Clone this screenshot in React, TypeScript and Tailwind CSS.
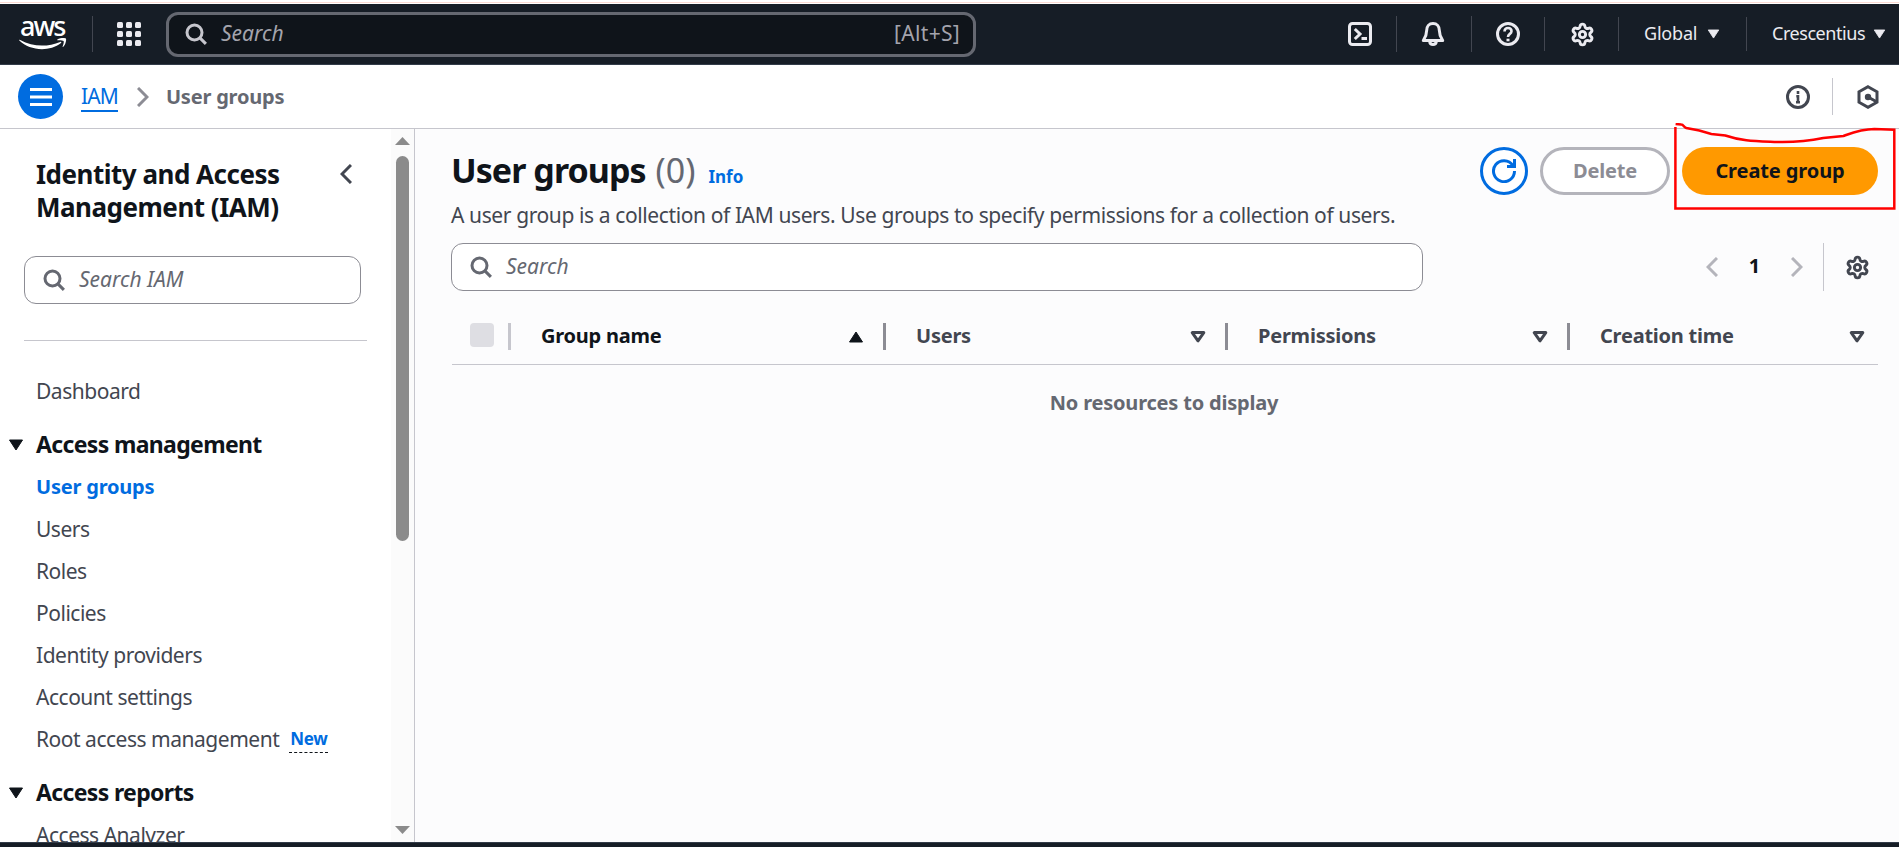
import React from "react";
import { Settings } from "lucide-react";

function SearchIcon({ className = "" }: { className?: string }) {
  return (
    <svg width="24" height="24" viewBox="0 0 16 16" fill="none" stroke="currentColor" strokeWidth="2" className={"shrink-0 " + className}>
      <circle cx="7" cy="7" r="5" />
      <path d="m10.6 10.6 4 4" />
    </svg>
  );
}

function Chevron({ left = false, className = "" }: { left?: boolean; className?: string }) {
  return (
    <svg width="12" height="20" viewBox="0 0 12 20" fill="none" stroke="currentColor" strokeWidth="3" className={"shrink-0 " + className}>
      <path d={left ? "M11 1 2 10l9 9" : "m1 1 9 9-9 9"} />
    </svg>
  );
}

function Caret({ className = "" }: { className?: string }) {
  return (
    <svg width="16" height="12" viewBox="0 0 16 12" fill="currentColor" stroke="currentColor" strokeLinejoin="round" className={"shrink-0 " + className}>
      <path d="M1.5 1h13L8 11z" />
    </svg>
  );
}

function SortIcon() {
  return (
    <svg width="16" height="12" viewBox="0 0 16 12" fill="none" stroke="currentColor" strokeWidth="3" strokeLinejoin="round" className="shrink-0">
      <path d="M2.2 1.6h11.6L8 9.8z" />
    </svg>
  );
}

function AwsLogo() {
  return (
    <div className="relative h-[60px] w-[48px] shrink-0 text-white">
      <span className="absolute left-[1px] top-[8px] text-[27px] font-medium leading-[27px] tracking-[-2px]">aws</span>
      <svg className="absolute left-0 top-[33px]" width="48" height="14" viewBox="0 0 48 14" fill="currentColor">
        <path d="M.3 3.6C0 3.1.5 2.6 1.2 3 8 6.700 15.500 8.600 23 8.600c6 0 12.500-1.300 18.200-3.700.9-.4 1.600.6.800 1.200C36.800 10.200 29.500 12.300 23 12.300 14.200 12.300 6.200 9 .3 3.600z" />
        <path d="M38.600 3.200c-.5 0-.7-.5-.2-.8 2.600-1.700 7.800-1.800 8.500-1 .7.900-.2 6-2.600 8.300-.4.400-.9.200-.7-.3.700-1.600 1.600-4.700 1-5.500-.6-.8-4.200-.8-6-.7z" />
      </svg>
    </div>
  );
}

function AppGrid() {
  return (
    <div className="grid w-[24px] shrink-0 grid-cols-3 gap-[3px]">
      {Array.from({ length: 9 }, (_, i) => (
        <span key={i} className="size-[6px] rounded-[1.5px] bg-[#ebebf0]" />
      ))}
    </div>
  );
}

function HeaderBar() {
  return (
    <header className="flex h-[61px] items-center border-b border-[#333c49] bg-[#161d26] text-[#ebebf0]">
      <div className="flex w-[166px] shrink-0 items-center pl-[19px]">
        <AwsLogo />
        <span className="ml-[25px] h-[36px] w-px bg-[#424650]" />
        <span className="ml-[24px]"><AppGrid /></span>
      </div>
      <div className="flex h-[45px] w-[810px] shrink-0 items-center rounded-[12px] border-[3px] border-[#656871] bg-[#0f141a] pl-[15px] pr-[13px] text-[21px] text-[#a4a4ad]">
        <SearchIcon className="text-[#c6c6cd]" />
        <span className="ml-[13px] pb-[1px] leading-none italic">Search</span>
        <span className="ml-auto pb-[1px] leading-none tracking-[0.300px]">[Alt+S]</span>
      </div>
      <div className="ml-[372px] flex items-center">
        <svg width="24" height="24" viewBox="0 0 24 24" fill="none" stroke="currentColor" strokeWidth="3">
          <rect x="1.500" y="1.500" width="21" height="21" rx="3" />
          <path d="m6.800 7 5.200 5-5.200 5M13.500 16.500H19" />
        </svg>
        <span className="ml-[24px] h-[36px] w-px bg-[#424650]" />
        <svg className="ml-[24px]" width="24" height="24" viewBox="0 0 24 24" fill="none" stroke="currentColor" strokeWidth="3" strokeLinejoin="round">
          <path d="M12 1.500c-4 0-6.300 3-6.300 6.700 0 4.400-1.200 7-3.400 10.300h19.400c-2.200-3.300-3.400-5.900-3.400-10.300 0-3.700-2.300-6.700-6.300-6.700zM8.700 19.500c.2 1.900 1.500 3 3.300 3s3.100-1.100 3.300-3" />
        </svg>
        <span className="ml-[26px] h-[36px] w-px bg-[#424650]" />
        <svg className="ml-[24px]" width="24" height="24" viewBox="0 0 24 24" fill="none" stroke="currentColor">
          <circle cx="12" cy="12" r="10.500" strokeWidth="3" />
          <path d="M8.500 9.500c0-2.200 1.400-3.500 3.500-3.500s3.500 1.300 3.500 3.200c0 2.700-3.500 2.700-3.500 5.800" strokeWidth="2.600" />
          <path d="M12 16.700v2.600" strokeWidth="3" />
        </svg>
        <span className="ml-[24px] h-[34px] w-px bg-[#424650]" />
        <Settings size={25} strokeWidth={2.8} className="ml-[25px]" />
        <span className="ml-[23px] h-[34px] w-px bg-[#424650]" />
        <span className="ml-[25px] w-[54px] whitespace-nowrap pb-[2px] text-[18px] leading-none tracking-[-0.200px]">Global</span>
        <Caret className="ml-[9px] h-[10px] w-[13px]" />
        <span className="ml-[26px] h-[34px] w-px bg-[#424650]" />
        <span className="ml-[25px] w-[95px] whitespace-nowrap pb-[2px] text-[18px] leading-none tracking-[-0.450px]">Crescentius</span>
        <Caret className="ml-[6px] h-[10px] w-[13px]" />
      </div>
    </header>
  );
}

function Toolbar() {
  return (
    <div className="flex h-[64px] shrink-0 items-center border-b border-[#c6c6cd] bg-white pl-[18px]">
      <span className="flex size-[45px] items-center justify-center rounded-full bg-[#006ce0]">
        <svg width="22" height="18" viewBox="0 0 22 18" fill="none" stroke="white" strokeWidth="3">
          <path d="M0 1.500h22M0 9h22M0 16.500h22" />
        </svg>
      </span>
      <span className="ml-[18px] mt-px h-[29px] border-b-2 border-[#006ce0] text-[21px] leading-[27px] tracking-[-0.900px] text-[#006ce0]">IAM</span>
      <Chevron className="ml-[19px] text-[#8c8c94]" />
      <span className="ml-[17px] text-[20px] font-bold leading-none tracking-[-0.200px] text-[#656871]">User groups</span>
      <div className="ml-auto flex items-center pr-[19px] text-[#424650]">
        <svg width="24" height="24" viewBox="0 0 24 24" fill="none" stroke="currentColor" strokeWidth="3">
          <circle cx="12" cy="12" r="10.500" />
          <path d="M12 6v3M10.300 11.300H12V18M10 17.300h4" strokeWidth="2.600" />
        </svg>
        <span className="ml-[22px] h-[37px] w-px bg-[#c6c6cd]" />
        <svg className="ml-[23px]" width="24" height="24" viewBox="0 0 24 24" fill="none" stroke="currentColor" strokeWidth="3">
          <path d="m12 1.700 9 5.100v10.400l-9 5.100-9-5.100V6.800z" />
          <circle cx="12" cy="12" r="3.200" fill="currentColor" stroke="none" />
          <path d="m12 12 9 5" />
        </svg>
      </div>
    </div>
  );
}

function NavItem({ label, active = false, badge }: { label: string; active?: boolean; badge?: string }) {
  return (
    <div className="flex h-[42px] shrink-0 items-center pl-[36px]">
      <span className={active ? "whitespace-nowrap text-[20px] font-bold leading-none tracking-[-0.200px] text-[#006ce0]" : "whitespace-nowrap text-[21px] leading-none tracking-[-0.480px] text-[#424650]"}>{label}</span>
      {badge && (
        <span className="ml-[10px] mt-[4px] h-[24px] border-b border-dashed border-[#0f141a] pl-px text-[17px] font-bold leading-[20px] tracking-[-0.300px] text-[#006ce0]">{badge}</span>
      )}
    </div>
  );
}

function NavHeading({ label }: { label: string }) {
  return (
    <div className="flex h-[44px] shrink-0 items-center pl-[8px] text-[#0f141a]">
      <Caret className="mt-[2px]" />
      <span className="ml-[12px] whitespace-nowrap text-[23px] font-bold leading-none tracking-[-0.650px]">{label}</span>
    </div>
  );
}

function Sidebar() {
  return (
    <aside className="flex w-[415px] shrink-0 border-r border-[#c6c6cd] bg-white">
      <nav className="flex min-w-0 flex-1 flex-col overflow-hidden">
        <div className="flex shrink-0 items-start pl-[36px] pr-[39px] pt-[29px]">
          <h2 className="w-[260px] text-[26px] font-bold leading-[33px] tracking-[-0.500px] text-[#0f141a]">Identity and Access Management (IAM)</h2>
          <Chevron left className="ml-auto mt-[6px] text-[#424650]" />
        </div>
        <div className="ml-[24px] mt-[32px] flex h-[48px] w-[337px] shrink-0 items-center rounded-[12px] border border-[#8c8c94] pl-[17px] text-[#656871]">
          <SearchIcon />
          <span className="ml-[13px] pb-[2px] text-[21px] leading-none italic">Search IAM</span>
        </div>
        <div className="ml-[24px] mt-[36px] h-px w-[343px] shrink-0 bg-[#c6c6cd]" />
        <div className="mt-[29px] flex flex-col">
          <NavItem label="Dashboard" />
          <div className="h-[10px] shrink-0" />
          <NavHeading label="Access management" />
          <NavItem label="User groups" active />
          <NavItem label="Users" />
          <NavItem label="Roles" />
          <NavItem label="Policies" />
          <NavItem label="Identity providers" />
          <NavItem label="Account settings" />
          <NavItem label="Root access management" badge="New" />
          <div className="h-[10px] shrink-0" />
          <NavHeading label="Access reports" />
          <NavItem label="Access Analyzer" />
        </div>
      </nav>
      <div className="flex w-[23px] shrink-0 flex-col items-center bg-[#fbfbfb] pt-[8px] text-[#8b8b8b]">
        <svg width="15" height="8" viewBox="0 0 15 8" fill="currentColor"><path d="M0 8 7.500 0 15 8z" /></svg>
        <div className="mt-[11px] h-[385px] w-[13px] rounded-full bg-[#8b8b8b]" />
        <svg className="mb-[8px] mt-auto" width="15" height="8" viewBox="0 0 15 8" fill="currentColor"><path d="M0 0 7.500 8 15 0z" /></svg>
      </div>
    </aside>
  );
}

function Column({ label, className, sorted = false, last = false }: { label: string; className: string; sorted?: boolean; last?: boolean }) {
  return (
    <div className={"flex h-full shrink-0 items-center text-[#424650] " + className}>
      <span className={"whitespace-nowrap pb-px text-[20px] font-bold leading-none tracking-[-0.230px] " + (sorted ? "text-[#0f141a]" : "")}>{label}</span>
      <span className={"ml-auto mt-px " + (last ? "mr-[13px]" : "mr-[19px]")}>
        {sorted ? <Caret className="rotate-180 text-[#0f141a]" /> : <SortIcon />}
      </span>
      {!last && <span className="h-[27px] w-[3px] bg-[#8c8c94]" />}
    </div>
  );
}

function Main() {
  return (
    <main className="flex min-w-0 flex-1 flex-col bg-[#fcfcfd] pl-[37px] pr-[21px] pt-[18px]">
      <div className="flex h-[48px] shrink-0">
        <h1 className="-ml-px flex items-baseline leading-[46px]">
          <span className="text-[34px] font-bold tracking-[-0.950px] text-[#0f141a]">User groups</span>
          <span className="ml-[10px] text-[34px] text-[#656871]">(0)</span>
          <span className="ml-[13px] text-[17px] font-bold text-[#006ce0]">Info</span>
        </h1>
        <div className="ml-auto flex text-[20px] font-bold leading-none">
          <span className="flex size-[48px] items-center justify-center rounded-full border-[3px] border-[#006ce0] bg-white text-[#006ce0]">
            <svg width="24" height="24" viewBox="0 0 24 24" fill="none" stroke="currentColor" strokeWidth="3">
              <path d="M22.500 12A10.500 10.500 0 1 1 20.800 6.400M22.500 0v7.500H15" />
            </svg>
          </span>
          <span className="ml-[12px] flex w-[130px] items-center justify-center rounded-full border-[3px] border-[#b4b4bb] bg-white pb-px tracking-[-0.150px] text-[#8c8c94]">Delete</span>
          <span className="relative ml-[12px] flex w-[196px] items-center justify-center rounded-full bg-[#ff9900] pb-px tracking-[-0.100px] text-[#0f141a]">
            Create group
            <svg className="absolute left-[-10px] top-[-24px]" width="226" height="90" viewBox="1672 123 226 90" fill="none" stroke="#ff0000" strokeWidth="2.500">
              <path d="M1675.400 127v81.500h218.900V129.700l-20-.7c-13 0-24 4.500-31 7l-20 2c-12 2.500-24 4.500-46 4-22-1-36-1-52-6.500l-14-1.500-12-3.500-13-2.500c-3-1-2.500-3.500-5-3.500l-5.700-.5" />
            </svg>
          </span>
        </div>
      </div>
      <p className="-ml-px mt-[8px] h-[26px] shrink-0 whitespace-nowrap text-[21px] leading-[25px] tracking-[-0.390px] text-[#424650]">
        A user group is a collection of IAM users. Use groups to specify permissions for a collection of users.
      </p>
      <div className="mt-[14px] flex h-[48px] shrink-0 items-center">
        <div className="-ml-px flex h-[48px] w-[972px] items-center rounded-[12px] border border-[#8c8c94] bg-white pl-[17px] text-[#656871]">
          <SearchIcon />
          <span className="ml-[13px] pb-[2px] text-[21px] leading-none italic">Search</span>
        </div>
        <div className="ml-auto flex h-full items-center pr-[8px]">
          <Chevron left className="text-[#b4b4bb]" />
          <span className="w-[73px] pb-[2px] text-center text-[20px] font-bold leading-none text-[#0f141a]">1</span>
          <Chevron className="text-[#b4b4bb]" />
          <span className="ml-[20px] h-full w-px bg-[#c6c6cd]" />
          <Settings size={25} strokeWidth={2.800} className="ml-[21px] text-[#424650]" />
        </div>
      </div>
      <div className="mt-[17px] flex h-[57px] shrink-0 items-center border-b border-[#c6c6cd]">
        <span className="ml-[18px] mt-[-3px] size-[24px] rounded-[4px] bg-[#dedee3]" />
        <span className="ml-[14px] h-[27px] w-[3px] bg-[#c6c6cd]" />
        <Column label="Group name" className="ml-[30px] w-[345px]" sorted />
        <Column label="Users" className="ml-[30px] w-[312px]" />
        <Column label="Permissions" className="ml-[30px] w-[312px]" />
        <Column label="Creation time" className="ml-[30px] w-[278px]" last />
      </div>
      <p className="-ml-[2px] mt-[26px] text-center text-[20px] font-bold leading-[24px] tracking-[-0.200px] text-[#656871]">No resources to display</p>
    </main>
  );
}

export default function App() {
  return (
    <div className="flex h-[847px] w-[1899px] flex-col overflow-hidden bg-white font-['Noto_Sans',sans-serif]">
      <div className="h-[4px] shrink-0 bg-white pt-[2px]"><div className="h-px bg-[#fbdcd4]" /></div>
      <HeaderBar />
      <Toolbar />
      <div className="flex min-h-0 flex-1">
        <Sidebar />
        <Main />
      </div>
      <div className="h-[5px] shrink-0 border-t border-[#333c49] bg-[#161d26]" />
    </div>
  );
}
